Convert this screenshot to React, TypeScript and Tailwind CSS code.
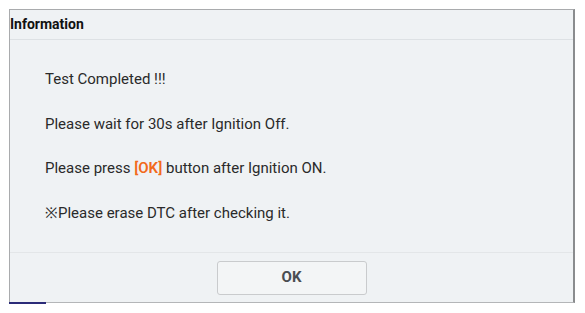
export default function App() {
  return (
    <div className="w-[585px] h-[313px] bg-white pt-[9px] pl-[9px]" style={{ fontFamily: "Roboto, 'Liberation Sans', sans-serif" }}>
      <div className="w-[566px] h-[294px] flex flex-col bg-[#eff2f4] border border-[#a9abad] border-r-2 border-r-[#8a8c8e] border-b-[#b4b6b8]">
        <div className="h-[30px] flex items-center border-b border-[#dde1e4] text-[14px] font-bold text-[#111]">
          Information
        </div>
        <div className="flex-1 flex flex-col gap-[24.7px] pt-[29px] pl-[35px] text-[15px] leading-[20px] text-[#2a2a2a]">
          <div>Test Completed !!!</div>
          <div>Please wait for 30s after Ignition Off.</div>
          <div>
            Please press <span className="text-[#f26a1b] font-semibold">[OK]</span> button after Ignition ON.
          </div>
          <div>※Please erase DTC after checking it.</div>
        </div>
        <div className="h-[50px] flex items-center justify-center border-t border-[#e3e6e8]">
          <button className="w-[150px] h-[34px] rounded-[3px] border border-[#c9cbcd] bg-[#f3f5f6] text-[15px] font-bold text-[#4a4d52]">
            OK
          </button>
        </div>
      </div>
      <div className="-mt-[1px] w-[37px] h-[2px] bg-[#2b2b78]" />
    </div>
  );
}
